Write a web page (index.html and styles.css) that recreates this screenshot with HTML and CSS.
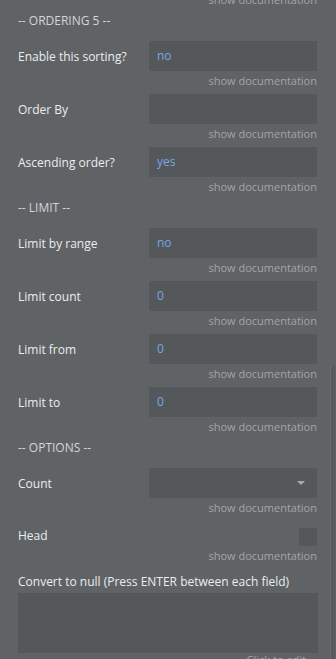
FILE: index.html
```html
<!DOCTYPE html>
<html lang="en">
<head>
    <meta charset="UTF-8">
    <meta name="viewport" content="width=device-width, initial-scale=1.0">
    <title>Search options</title>
    <link rel="stylesheet" href="styles.css">
</head>
<body>
    <div class="panel">
        <div class="doc">show documentation</div>

        <div class="header">-- ORDERING 5 --</div>
        <div class="row">
            <label>Enable this sorting?</label>
            <div class="field value">no</div>
        </div>
        <div class="doc">show documentation</div>
        <div class="row">
            <label>Order By</label>
            <div class="field"></div>
        </div>
        <div class="doc">show documentation</div>
        <div class="row">
            <label>Ascending order?</label>
            <div class="field value">yes</div>
        </div>
        <div class="doc">show documentation</div>

        <div class="header">-- LIMIT --</div>
        <div class="row">
            <label>Limit by range</label>
            <div class="field value">no</div>
        </div>
        <div class="doc">show documentation</div>
        <div class="row">
            <label>Limit count</label>
            <div class="field value">0</div>
        </div>
        <div class="doc">show documentation</div>
        <div class="row">
            <label>Limit from</label>
            <div class="field value">0</div>
        </div>
        <div class="doc">show documentation</div>
        <div class="row">
            <label>Limit to</label>
            <div class="field value">0</div>
        </div>
        <div class="doc">show documentation</div>

        <div class="header">-- OPTIONS --</div>
        <div class="row">
            <label>Count</label>
            <div class="field select"><span class="arrow"></span></div>
        </div>
        <div class="doc">show documentation</div>
        <div class="row check-row">
            <label>Head</label>
            <div class="checkbox"></div>
        </div>
        <div class="doc">show documentation</div>

        <div class="long-label">Convert to null (Press ENTER between each field)</div>
        <div class="textarea"></div>
        <div class="doc edit">Click to edit</div>
    </div>
    <div class="scrollbar"></div>
</body>
</html>
```

FILE: styles.css
```css
body{
    margin: 0;
    background: #5f6366;
    font-family: "Open Sans", "Liberation Sans", sans-serif;
    color: #eceded;
    overflow: hidden;
    height: 659px;
    position: relative;
}
.panel{
    padding: 0 19px 0 18px;
    margin-top: -10px;
}
.header{
    font-size: 12px;
    line-height: 16px;
    color: #d3d5d6;
    margin-bottom: 12px;
}
.row{
    display: flex;
    align-items: center;
    height: 30px;
}
.row label{
    width: 131px;
    font-size: 12px;
    flex-shrink: 0;
}
.field{
    flex: 1;
    height: 30px;
    background: #54585b;
    font-size: 12px;
    line-height: 30px;
    padding-left: 8px;
    box-sizing: border-box;
}
.value{
    color: #79a6e4;
}
.select{
    position: relative;
}
.arrow{
    position: absolute;
    right: 12px;
    top: 13px;
    border-left: 4px solid transparent;
    border-right: 4px solid transparent;
    border-top: 4px solid #a9acae;
}
.check-row{
    justify-content: space-between;
    height: 25px;
    align-items: flex-start;
}
.check-row label{
    line-height: 30px;
}
.checkbox{
    width: 18px;
    height: 18px;
    margin-top: 7px;
    background: #54585b;
}
.doc{
    text-align: right;
    font-size: 11px;
    line-height: 18px;
    padding-top: 1px;
    height: 17px;
    color: #a2a5a7;
    margin-bottom: 5px;
}
.edit{
    padding-right: 11px;
    padding-top: 0;
    line-height: 14px;
}
.long-label{
    font-size: 12px;
    line-height: 18px;
    padding-top: 4px;
    margin-bottom: 2px;
}
.textarea{
    height: 60px;
    margin-right: -1px;
    background: #54585b;
}
.scrollbar{
    position: absolute;
    right: 1px;
    top: 366px;
    bottom: 0;
    width: 4px;
    background: #585c5f;
    border-left: 1px solid #686c6f;
}
```
